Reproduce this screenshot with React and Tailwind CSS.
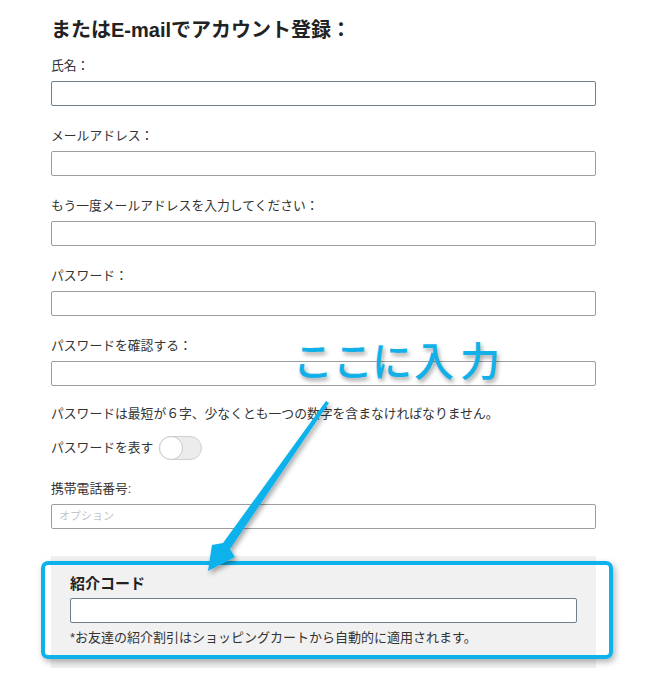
const fields = [
  { label: "氏名：", border: "border-[#6f7d8c]" },
  { label: "メールアドレス：", border: "border-[#9d9d9d]" },
  { label: "もう一度メールアドレスを入力してください：", border: "border-[#9d9d9d]" },
  { label: "パスワード：", border: "border-[#9d9d9d]" },
  { label: "パスワードを確認する：", border: "border-[#9d9d9d]" },
];

function Field({ label, border }) {
  return (
    <div className="mb-[20px]">
      <p className="mb-[5px] h-[20px] text-[12.8px] leading-[20px] text-[#333]">{label}</p>
      <div className={`h-[25px] w-[545px] rounded-[2px] border ${border} bg-white`} />
    </div>
  );
}

export default function App() {
  return (
    <div className="relative h-[680px] w-[646px] overflow-hidden bg-white font-['Liberation_Sans','Noto_Sans_CJK_JP',sans-serif] text-[#333]">
      <div className="w-[596px] pl-[51px] pt-[16px]">
        <h1 className="mb-[12px] h-[28px] text-[20px] font-bold leading-[28px] text-[#222]">
          またはE-mailでアカウント登録：
        </h1>

        {fields.map((f) => (
          <Field key={f.label} label={f.label} border={f.border} />
        ))}

        <p className="-mt-[2px] h-[20px] text-[12.8px] leading-[20px]">
          パスワードは最短が６字、少なくとも一つの数字を含まなければなりません。
        </p>

        <div className="mt-[12px] flex h-[24px] items-center gap-[6px]">
          <span className="text-[12.8px] leading-[20px]">パスワードを表す</span>
          <div className="relative h-[24px] w-[43px] rounded-full border border-[#cfcfcf] bg-[#ececec]">
            <div className="absolute -left-px -top-px h-[24px] w-[24px] rounded-full border border-[#c8c8c8] bg-white" />
          </div>
        </div>

        <p className="mt-[19px] mb-[5px] h-[20px] text-[12.8px] leading-[20px]">携帯電話番号:</p>
        <div className="flex h-[25px] w-[545px] items-center rounded-[2px] border border-[#9d9d9d] bg-white pl-[7px]">
          <span className="text-[11px] text-[#c4c4c4]">オプション</span>
        </div>

        <div className="relative mt-[27px] h-[112px] w-[545px] bg-[#f1f1f1] px-[19px] pt-[17px]">
          <p className="mb-[3px] h-[22px] text-[15px] font-bold leading-[22px] text-[#222]">紹介コード</p>
          <div className="h-[25px] w-[507px] rounded-[2px] border border-[#6f7d8c] bg-white" />
          <p className="mt-[6px] text-[13px] leading-[18px] text-[#333]">
            *お友達の紹介割引はショッピングカートから自動的に適用されます。
          </p>
          <div className="pointer-events-none absolute -left-[10px] -right-[17px] top-[5px] bottom-[9px] rounded-[7px] border-[4px] border-[#0db2ec] shadow-[2px_3px_6px_rgba(0,0,0,0.3)]" />
        </div>
      </div>

      {/* callout */}
      <svg className="absolute left-0 top-0" width="646" height="680" viewBox="0 0 646 680">
        <defs>
          <filter id="sh" x="-20%" y="-20%" width="140%" height="140%">
            <feDropShadow dx="2" dy="3" stdDeviation="2.5" floodColor="#000" floodOpacity="0.35" />
          </filter>
        </defs>
        <polygon
          points="326,401 329,403 230,549 235,557 208,571 212,545 223,543"
          fill="#0db2ec"
          filter="url(#sh)"
        />
      </svg>
      <div className="absolute left-[293px] top-[335px] flex text-[40px] font-medium leading-[54px] text-[#12b0e9] [text-shadow:2px_3px_4px_rgba(0,0,0,0.35)]">
        <span className="w-[40px]">こ</span>
        <span className="w-[39px]">こ</span>
        <span className="w-[42px]">に</span>
        <span className="w-[46px]">入</span>
        <span>力</span>
      </div>
    </div>
  );
}
